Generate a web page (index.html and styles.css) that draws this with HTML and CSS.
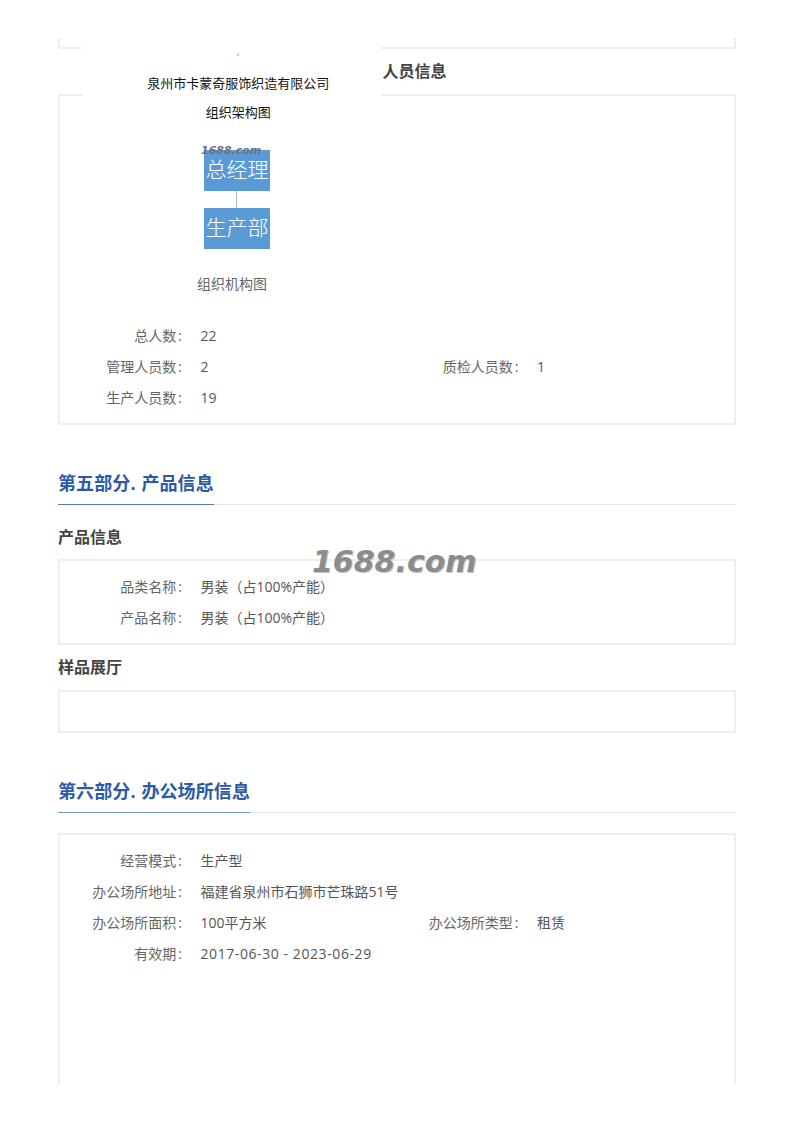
FILE: index.html
```html
<!DOCTYPE html>
<html lang="zh">
<head>
<meta charset="utf-8">
<title>企业信息</title>
<link rel="stylesheet" href="styles.css">
</head>
<body>
<main class="page">
  <div class="card card-cut"></div>

  <h3 class="sub-title sub-behind">人员信息</h3>
  <section class="card">
    <figure class="org-figure"><figcaption>组织机构图</figcaption></figure>
    <div class="rows">
      <div class="row"><span class="label">总人数</span><span class="value">22</span></div>
      <div class="row"></div>
      <div class="row"><span class="label">管理人员数</span><span class="value">2</span></div>
      <div class="row"><span class="label">质检人员数</span><span class="value">1</span></div>
      <div class="row"><span class="label">生产人员数</span><span class="value">19</span></div>
    </div>
  </section>

  <header class="section-head section-five"><h2>第五部分. 产品信息</h2></header>
  <h3 class="sub-title sub-first">产品信息</h3>
  <section class="card">
    <div class="rows">
      <div class="row wide"><span class="label">品类名称</span><span class="value">男装（占100%产能）</span></div>
      <div class="row wide"><span class="label">产品名称</span><span class="value">男装（占100%产能）</span></div>
    </div>
  </section>
  <h3 class="sub-title">样品展厅</h3>
  <section class="card card-empty"></section>

  <header class="section-head section-six"><h2>第六部分. 办公场所信息</h2></header>
  <section class="card card-last">
    <div class="rows">
      <div class="row wide"><span class="label">经营模式</span><span class="value">生产型</span></div>
      <div class="row wide"><span class="label">办公场所地址</span><span class="value">福建省泉州市石狮市芒珠路51号</span></div>
      <div class="row"><span class="label">办公场所面积</span><span class="value">100平方米</span></div>
      <div class="row"><span class="label">办公场所类型</span><span class="value">租赁</span></div>
      <div class="row wide"><span class="label">有效期</span><span class="value value-date">2017-06-30 - 2023-06-29</span></div>
    </div>
  </section>

  <div class="org-image">
    <span class="tick">,</span>
    <p class="org-line">泉州市卡蒙奇服饰织造有限公司</p>
    <p class="org-line">组织架构图</p>
    <div class="org-chart">
      <div class="org-box">总经理<span class="mark-small">1688.com</span></div>
      <div class="org-link"></div>
      <div class="org-box">生产部</div>
    </div>
  </div>

  <div class="watermark">1688.com</div>
</main>
</body>
</html>
```
FILE: styles.css
```css
* { box-sizing: border-box; }
html, body { margin: 0; padding: 0; background: #fff; }
body {
  font-family: "Open Sans", "Noto Sans CJK SC", sans-serif;
  font-size: 14px;
  color: #666;
}
.page {
  position: relative;
  width: 678px;
  height: 1046px;
  margin: 38px 0 0 58px;
  overflow: hidden;
}
.card {
  border: 2px solid #eeeeee;
  background: #fff;
}
.card-cut { height: 11px; border-top: 0; }
.card-empty { height: 43px; }
.card-last { height: 280px; margin-top: 20px; }
.sub-title {
  margin: 10px 0 11px;
  font-size: 16px;
  line-height: 24px;
  font-weight: 700;
  color: #444;
}
.sub-behind { margin-left: 324.5px; }
.sub-first { margin: 20px 0 10px; }
.section-head { border-bottom: 1px solid #e6e6e6; }
.section-five { margin-top: 45px; }
.section-six { margin-top: 45px; }
.section-head h2 {
  display: inline-block;
  margin: 0 0 -1px;
  padding-bottom: 7px;
  font-size: 18px;
  line-height: 27px;
  font-weight: 700;
  word-spacing: 1px;
  letter-spacing: 0.1px;
  color: #2b5aa6;
  border-bottom: 1px solid #4f7cc4;
}
.section-six h2 { border-bottom-color: #6b9de4; }
.org-figure {
  width: 300px;
  margin: 0 0 24px 22px;
  padding-top: 176px;
  text-align: center;
}
.org-figure figcaption { line-height: 24px; }
.rows {
  display: grid;
  grid-template-columns: 336.5px 1fr;
  padding: 10px 0;
}
.org-figure + .rows { padding-top: 0; }
.row {
  display: flex;
  align-items: center;
  gap: 17.5px;
  height: 31px;
  line-height: 31px;
}
.wide { grid-column: 1 / -1; }
.label {
  width: 123px;
  padding-right: 1px;
  text-align: right;
  white-space: nowrap;
  color: #666;
}
.label::after { content: ":"; margin-left: 2px; }
.value { color: #555; white-space: nowrap; }
.value-date { letter-spacing: 0.58px; }
.org-image {
  position: absolute;
  left: 24px;
  top: 0;
  width: 300px;
  height: 230px;
  padding: 31px 0 0 10px;
  background: #fff;
  display: flex;
  flex-direction: column;
  align-items: center;
}
.tick {
  position: absolute;
  left: 155px;
  top: 9px;
  font-size: 9px;
  line-height: 10px;
  color: #555;
}
.org-line {
  height: 29px;
  margin: 0 0 0 4px;
  font-size: 13px;
  line-height: 29px;
  color: #111;
  white-space: nowrap;
}
.org-line::after { content: "."; font-size: 6px; line-height: 0; color: #aaa; }
.org-chart {
  display: flex;
  flex-direction: column;
  align-items: center;
  margin-top: 23px;
}
.org-box {
  position: relative;
  width: 66px;
  height: 41px;
  background: #5b9bd5;
  color: #fff;
  font-weight: 300;
  font-size: 21px;
  line-height: 38px;
  text-align: center;
  white-space: nowrap;
}
.org-link { width: 1px; height: 17px; margin-right: 1px; background: #a9b8c4; }
.mark-small {
  position: absolute;
  left: -3px;
  top: -6px;
  font-family: "DejaVu Sans", sans-serif;
  font-weight: 700;
  font-style: italic;
  font-size: 11px;
  line-height: 13px;
  color: #6e7280;
}
.watermark {
  position: absolute;
  left: 254px;
  top: 506px;
  font-family: "DejaVu Sans", sans-serif;
  font-weight: 700;
  font-style: italic;
  font-size: 30px;
  line-height: 36px;
  color: #8c8c8c;
  text-shadow: 1px 1px 0 #c4c4c4;
  white-space: nowrap;
}
```
